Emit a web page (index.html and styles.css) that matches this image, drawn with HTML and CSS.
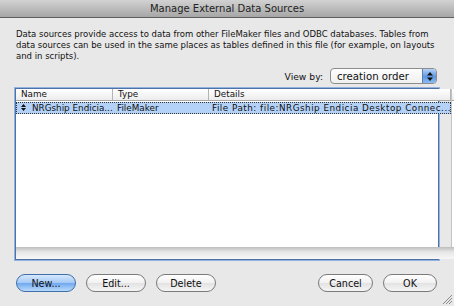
FILE: index.html
```html
<!DOCTYPE html>
<html lang="en">
<head>
  <meta charset="UTF-8" />
  <title>Manage External Data Sources</title>
  <link rel="stylesheet" href="styles.css">
</head>
<body>

<div class="window">
  <div class="titlebar">Manage External Data Sources</div>

  <div class="content">
    <p class="intro">Data sources provide access to data from other FileMaker files and ODBC databases. Tables from data sources can be used in the same places as tables defined in this file (for example, on layouts and in scripts).</p>

    <div class="view-by">
      <label>View by:</label>
      <div class="popup">
        <span>creation order</span>
        <span class="stepper">
          <svg width="6" height="9" viewBox="0 0 6 9"><path d="M3 0 L6 3.5 L0 3.5 Z M3 9 L6 5.5 L0 5.5 Z" fill="#111"/></svg>
        </span>
      </div>
    </div>

    <div class="table">
      <div class="table-main">
        <div class="row head">
          <div class="cell c-name">Name</div>
          <div class="cell c-type">Type</div>
          <div class="cell c-details">Details</div>
        </div>
        <div class="row selected">
          <div class="cell c-name">
            <svg class="handle" width="5" height="7" viewBox="0 0 5 7"><path d="M2.5 0 L5 3 L0 3 Z M2.5 7 L5 4 L0 4 Z" fill="#111"/></svg>NRGship Endicia...
          </div>
          <div class="cell c-type">FileMaker</div>
          <div class="cell c-details path">File Path: file:NRGship Endicia Desktop Connec...</div>
        </div>
        <div class="rows-empty"></div>
      </div>
      <div class="table-side">
        <div class="sort-head">
          <svg width="7" height="7" viewBox="0 0 7 7"><path d="M3.5 0 L7 5 L0 5 Z" fill="#555"/><rect x="0" y="6" width="7" height="1" fill="#555"/></svg>
        </div>
        <div class="side-empty"></div>
      </div>
      <div class="table-foot"></div>
    </div>

    <div class="buttons">
      <div class="group">
        <button class="btn default">New...</button>
        <button class="btn">Edit...</button>
        <button class="btn">Delete</button>
      </div>
      <div class="group right">
        <button class="btn">Cancel</button>
        <button class="btn">OK</button>
      </div>
    </div>
  </div>

  <svg class="grip" width="11" height="11" viewBox="0 0 11 11">
    <path d="M10 1 L1 10 M10 4 L4 10 M10 7 L7 10" stroke="#8a8a8a" stroke-width="1"/>
  </svg>
</div>

</body>
</html>
```

FILE: styles.css
```css
body {
  margin: 0;
  font-family: 'DejaVu Sans', 'Lucida Grande', sans-serif;
  background: #e8e8e8;
  color: #111;
}

.window {
  position: relative;
  width: 454px;
  height: 306px;
  background: #e8e8e8;
  overflow: hidden;
}

.titlebar {
  height: 17px;
  line-height: 17px;
  text-align: center;
  font-size: 10px;
  color: #222;
  background: linear-gradient(#d2d2d2, #a6a6a6);
  border-bottom: 1px solid #5f5f5f;
}

.content {
  padding: 11px 15px 0 15px;
}

.intro {
  margin: 0 -8px 0 1px;
  font-size: 8.5px;
  line-height: 11px;
}

.view-by {
  display: flex;
  justify-content: flex-end;
  align-items: center;
  gap: 7px;
  margin-top: 6px;
  padding-right: 2px;
  font-size: 9.2px;
}

.popup {
  display: flex;
  align-items: center;
  justify-content: space-between;
  width: 99px;
  height: 14px;
  padding-left: 6px;
  font-size: 10.2px;
  background: linear-gradient(#fdfdfd, #f0f0f0);
  border: 1px solid #8c8c8c;
  border-radius: 4px;
}

.stepper {
  display: flex;
  align-items: center;
  justify-content: center;
  width: 13px;
  height: 14px;
  border-radius: 0 3px 3px 0;
  background: linear-gradient(#b5d3f7, #5d97e0 55%, #8cbcf2);
  border-left: 1px solid #5b7fb3;
}

.table {
  display: grid;
  grid-template-columns: 1fr 12px;
  grid-template-rows: 158px 12px;
  margin-top: 4px;
  height: 170px;
  background: #fff;
  border: 1px solid #4c72a8;
  box-shadow: 0 0 0 1px #93b3de;
  font-size: 8.8px;
}

.table-main {
  display: flex;
  flex-direction: column;
}

.row {
  display: flex;
  height: 11px;
  line-height: 11px;
}

.row.head {
  background: linear-gradient(#ffffff, #ececec);
  border-bottom: 1px solid #a8a8a8;
}

.cell {
  padding-left: 5px;
  white-space: nowrap;
}

.head .cell {
  border-right: 1px solid #b4b4b4;
}

.c-name { width: 91px; }
.c-type { width: 90px; }
.c-details { flex: 1; overflow: hidden; }

.row.selected {
  height: 12px;
  line-height: 12px;
  margin-top: 1px;
  background: #b4d1f7;
  outline: 1px dotted #333;
  outline-offset: -1px;
}

.selected .path {
  letter-spacing: 0.5px;
}

.handle {
  margin-right: 6px;
  vertical-align: 0;
}

.rows-empty {
  flex: 1;
}

.table-side {
  display: flex;
  flex-direction: column;
  border-left: 1px solid #c4c4c4;
}

.sort-head {
  display: flex;
  align-items: center;
  justify-content: center;
  height: 11px;
  background: linear-gradient(#ffffff, #ececec);
  border-bottom: 1px solid #a8a8a8;
}

.side-empty {
  flex: 1;
  background: #fff;
}

.table-foot {
  grid-column: 1 / 3;
  background: linear-gradient(#bdbdbd, #e6e6e6 40%, #f7f7f7);
}

.buttons {
  display: flex;
  justify-content: space-between;
  margin-top: 14px;
  padding: 0 2px 0 1px;
}

.group {
  display: flex;
  gap: 10px;
}

.btn {
  width: 60px;
  height: 18px;
  padding: 0;
  font-family: 'DejaVu Sans', 'Lucida Grande', sans-serif;
  font-size: 9.6px;
  color: #111;
  background: linear-gradient(#ffffff, #f1f1f1 50%, #e2e2e2 51%, #f6f6f6);
  border: 1px solid #7a7a7a;
  border-radius: 9px;
}

.group.right .btn {
  width: 55px;
}

.group.right .btn:last-child {
  width: 54px;
}

.btn.default {
  background: linear-gradient(#d6e8fd, #a3c8f5 50%, #6fa8ee 51%, #b9dafc);
  border-color: #3f6ea8;
}

.grip {
  position: absolute;
  right: 1px;
  bottom: 1px;
}
```
